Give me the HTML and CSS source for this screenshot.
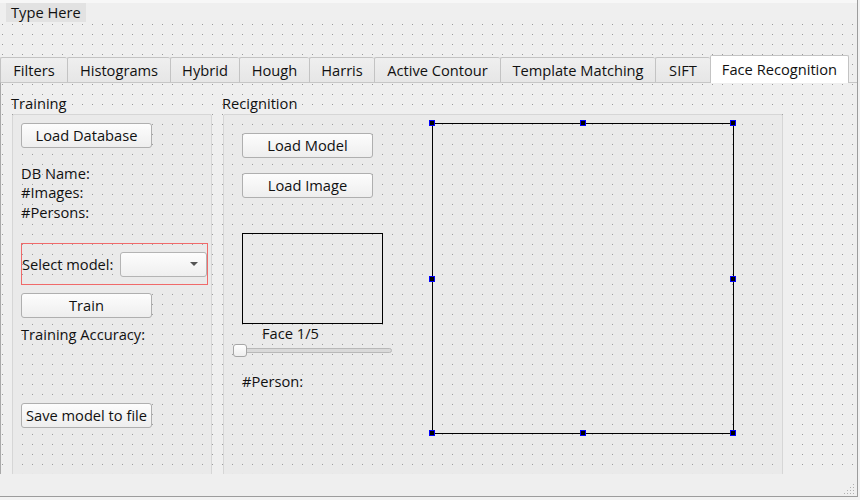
FILE: index.html
```html
<!DOCTYPE html>
<html>
<head>
<meta charset="utf-8">
<link rel="stylesheet" href="styles.css">
</head>
<body>
<div class="window">
  <div class="menubar"><span class="menu-item">Type Here</span></div>
  <div class="central grid">
    <div class="tabwidget">
      <div class="tabbar">
        <div class="tab t1">Filters</div>
        <div class="tab t2">Histograms</div>
        <div class="tab t3">Hybrid</div>
        <div class="tab t4">Hough</div>
        <div class="tab t5">Harris</div>
        <div class="tab t6">Active Contour</div>
        <div class="tab t7">Template Matching</div>
        <div class="tab t8">SIFT</div>
        <div class="tab active">Face Recognition</div>
      </div>
      <div class="pane">
        <div class="group g-train">
          <div class="group-title">Training</div>
          <div class="frame grid train-body">
            <div class="btn btn-db">Load Database</div>
            <div class="label l-dbname">DB Name:</div>
            <div class="label l-images">#Images:</div>
            <div class="label l-persons">#Persons:</div>
            <div class="layout-box">
              <span class="label">Select model:</span>
              <div class="combo"><span class="arrow"></span></div>
            </div>
            <div class="btn btn-train">Train</div>
            <div class="label l-acc">Training Accuracy:</div>
            <div class="btn btn-save">Save model to file</div>
          </div>
        </div>
        <div class="group g-rec">
          <div class="group-title">Recignition</div>
          <div class="frame grid rec-body">
            <div class="rec-col">
              <div class="btn btn-model">Load Model</div>
              <div class="btn btn-image">Load Image</div>
              <div class="face-box"></div>
              <div class="label l-face">Face 1/5</div>
              <div class="slider"><div class="groove"></div><div class="handle"></div></div>
              <div class="label l-person">#Person:</div>
            </div>
            <div class="image-box">
              <span class="sel h-tl"></span><span class="sel h-tm"></span><span class="sel h-tr"></span>
              <span class="sel h-ml"></span><span class="sel h-mr"></span>
              <span class="sel h-bl"></span><span class="sel h-bm"></span><span class="sel h-br"></span>
            </div>
          </div>
        </div>
      </div>
    </div>
  </div>
  <div class="statusbar">
    <svg class="grip" width="11" height="11" viewBox="0 0 11 11">
      <rect x="9" y="1" width="1" height="1" fill="#b0b0b0"/>
      <rect x="6" y="4" width="1" height="1" fill="#b0b0b0"/>
      <rect x="9" y="4" width="1" height="1" fill="#b0b0b0"/>
      <rect x="3" y="7" width="1" height="1" fill="#b0b0b0"/>
      <rect x="6" y="7" width="1" height="1" fill="#b0b0b0"/>
      <rect x="9" y="7" width="1" height="1" fill="#b0b0b0"/>
      <rect x="0" y="10" width="1" height="1" fill="#b0b0b0"/>
      <rect x="3" y="10" width="1" height="1" fill="#b0b0b0"/>
      <rect x="6" y="10" width="1" height="1" fill="#b0b0b0"/>
      <rect x="9" y="10" width="1" height="1" fill="#b0b0b0"/>
    </svg>
  </div>
</div>
</body>
</html>
```
FILE: styles.css
```css
html, body {
  margin: 0;
  padding: 0;
  background: #f2f2f2;
}
body {
  font-family: "Open Sans", "DejaVu Sans", sans-serif;
  font-size: 14.67px;
  line-height: 17px;
  color: #111111;
}
.window {
  width: 857px;
  height: 496px;
  border-right: 1px solid #9c9c9c;
  border-bottom: 1px solid #9c9c9c;
  background: #efefef;
  display: flex;
  flex-direction: column;
  overflow: hidden;
}
.grid {
  background-image: conic-gradient(at 1px 1px, rgba(0,0,0,0) 75%, #9b9b9b 0);
  background-size: 10px 10px;
  background-position: 2px 4px;
  background-attachment: fixed;
}
.menubar {
  height: 24px;
  flex: none;
  background: linear-gradient(#f7f7f7 0, #f7f7f7 3px, #efefef 3px);
  box-sizing: border-box;
  padding: 3px 0 0 6px;
}
.menu-item {
  display: inline-block;
  height: 19px;
  line-height: 19px;
  padding: 0 5px;
  background: #e2e2e2;
}
.central {
  height: 450px;
  flex: none;
  overflow: hidden;
  background-color: #efefef;
}
.tabwidget {
  margin-top: 31px;
}
.tabbar {
  display: flex;
  align-items: flex-end;
  height: 27px;
}
.tab {
  box-sizing: border-box;
  height: 25px;
  border-left: 1px solid #c3c3c3;
  border-top: 1px solid #c3c3c3;
  border-radius: 2px 2px 0 0;
  background: linear-gradient(#efefef, #e6e6e6);
  text-align: center;
  line-height: 25px;
  white-space: nowrap;
}
.t1 { width: 67px; }
.t2 { width: 103px; }
.t3 { width: 69px; }
.t4 { width: 70px; }
.t5 { width: 65px; }
.t6 { width: 126px; }
.t7 { width: 155px; }
.t8 { width: 55px; }
.tab.active {
  width: 139px;
  height: 28px;
  margin-bottom: -1px;
  border-right: 1px solid #c3c3c3;
  background: #ffffff;
  line-height: 27px;
  position: relative;
  z-index: 1;
}
.pane {
  height: 400px;
  border-top: 1px solid #c6c6c6;
  border-left: 1px solid #a9a9a9;
  display: flex;
  padding-top: 12px;
}
.group {
  display: flex;
  flex-direction: column;
}
.g-train { margin-left: 10px; }
.g-rec { margin-left: 10px; }
.group-title {
  height: 20px;
}
.frame {
  margin-left: 1px;
  height: 400px;
  box-sizing: border-box;
  border: 1px solid #d6d6d6;
  border-radius: 2px;
  background-color: #eaeaea;
}
.g-train .frame { width: 200px; }
.g-rec .frame { width: 560px; }
.train-body {
  display: flex;
  flex-direction: column;
  align-items: flex-start;
  padding-left: 8px;
}
.btn {
  box-sizing: border-box;
  width: 131px;
  height: 25px;
  border: 1px solid #afafaf;
  border-radius: 3px;
  background: linear-gradient(#fdfdfd, #eeeeee);
  text-align: center;
  line-height: 22px;
  white-space: nowrap;
}
.btn-db { margin-top: 8px; }
.l-dbname { margin-top: 17px; }
.l-images { margin-top: 2px; }
.l-persons { margin-top: 3px; }
.layout-box {
  margin-top: 22px;
  box-sizing: border-box;
  width: 187px;
  height: 42px;
  border: 1px solid #f06a6a;
  display: flex;
  align-items: center;
  justify-content: space-between;
  padding-left: 0;
}
.combo {
  box-sizing: border-box;
  width: 87px;
  height: 25px;
  border: 1px solid #b4b4b4;
  border-radius: 3px;
  background: linear-gradient(#fdfdfd, #efefef);
  display: flex;
  align-items: center;
  justify-content: flex-end;
  padding-right: 8px;
}
.arrow {
  width: 0;
  height: 0;
  border-left: 4px solid transparent;
  border-right: 4px solid transparent;
  border-top: 4px solid #555555;
}
.btn-train { margin-top: 8px; }
.l-acc { margin-top: 8px; }
.btn-save { margin-top: 60px; }
.rec-body {
  display: flex;
  align-items: flex-start;
}
.rec-col {
  width: 208px;
  flex: none;
  display: flex;
  flex-direction: column;
  align-items: flex-start;
}
.btn-model { margin-top: 18px; margin-left: 18px; }
.btn-image { margin-top: 15px; margin-left: 18px; }
.face-box {
  margin-top: 35px;
  margin-left: 18px;
  box-sizing: border-box;
  width: 141px;
  height: 91px;
  border: 1px solid #000000;
}
.l-face { margin-top: 1px; margin-left: 38px; }
.slider {
  margin-top: 2px;
  margin-left: 9px;
  width: 159px;
  height: 13px;
  display: flex;
  align-items: center;
  position: relative;
}
.groove {
  width: 100%;
  height: 5px;
  box-sizing: border-box;
  border: 1px solid #b8b8b8;
  border-radius: 3px;
  background: #d9d9d9;
}
.handle {
  position: absolute;
  left: 0;
  top: 0;
  box-sizing: border-box;
  width: 14px;
  height: 13px;
  border: 1px solid #a6a6a6;
  border-radius: 3px;
  background: linear-gradient(#ffffff, #eeeeee);
}
.l-person { margin-top: 16px; margin-left: 18px; }
.image-box {
  position: relative;
  margin-top: 8px;
  box-sizing: border-box;
  width: 302px;
  height: 311px;
  border: 1px solid #000000;
}
.sel {
  position: absolute;
  box-sizing: border-box;
  width: 6px;
  height: 6px;
  border: 1px solid #0000ff;
  background: #000000;
}
.h-tl { left: -4px; top: -4px; }
.h-tm { left: calc(50% - 3px); top: -4px; }
.h-tr { right: -3px; top: -4px; }
.h-ml { left: -4px; top: calc(50% - 3px); }
.h-mr { right: -3px; top: calc(50% - 3px); }
.h-bl { left: -4px; bottom: -3px; }
.h-bm { left: calc(50% - 3px); bottom: -3px; }
.h-br { right: -3px; bottom: -3px; }
.statusbar {
  height: 22px;
  flex: none;
  background: #efefef;
  display: flex;
  justify-content: flex-end;
  align-items: flex-end;
}
.grip {
  margin: 0 2px 2px 0;
}
```
